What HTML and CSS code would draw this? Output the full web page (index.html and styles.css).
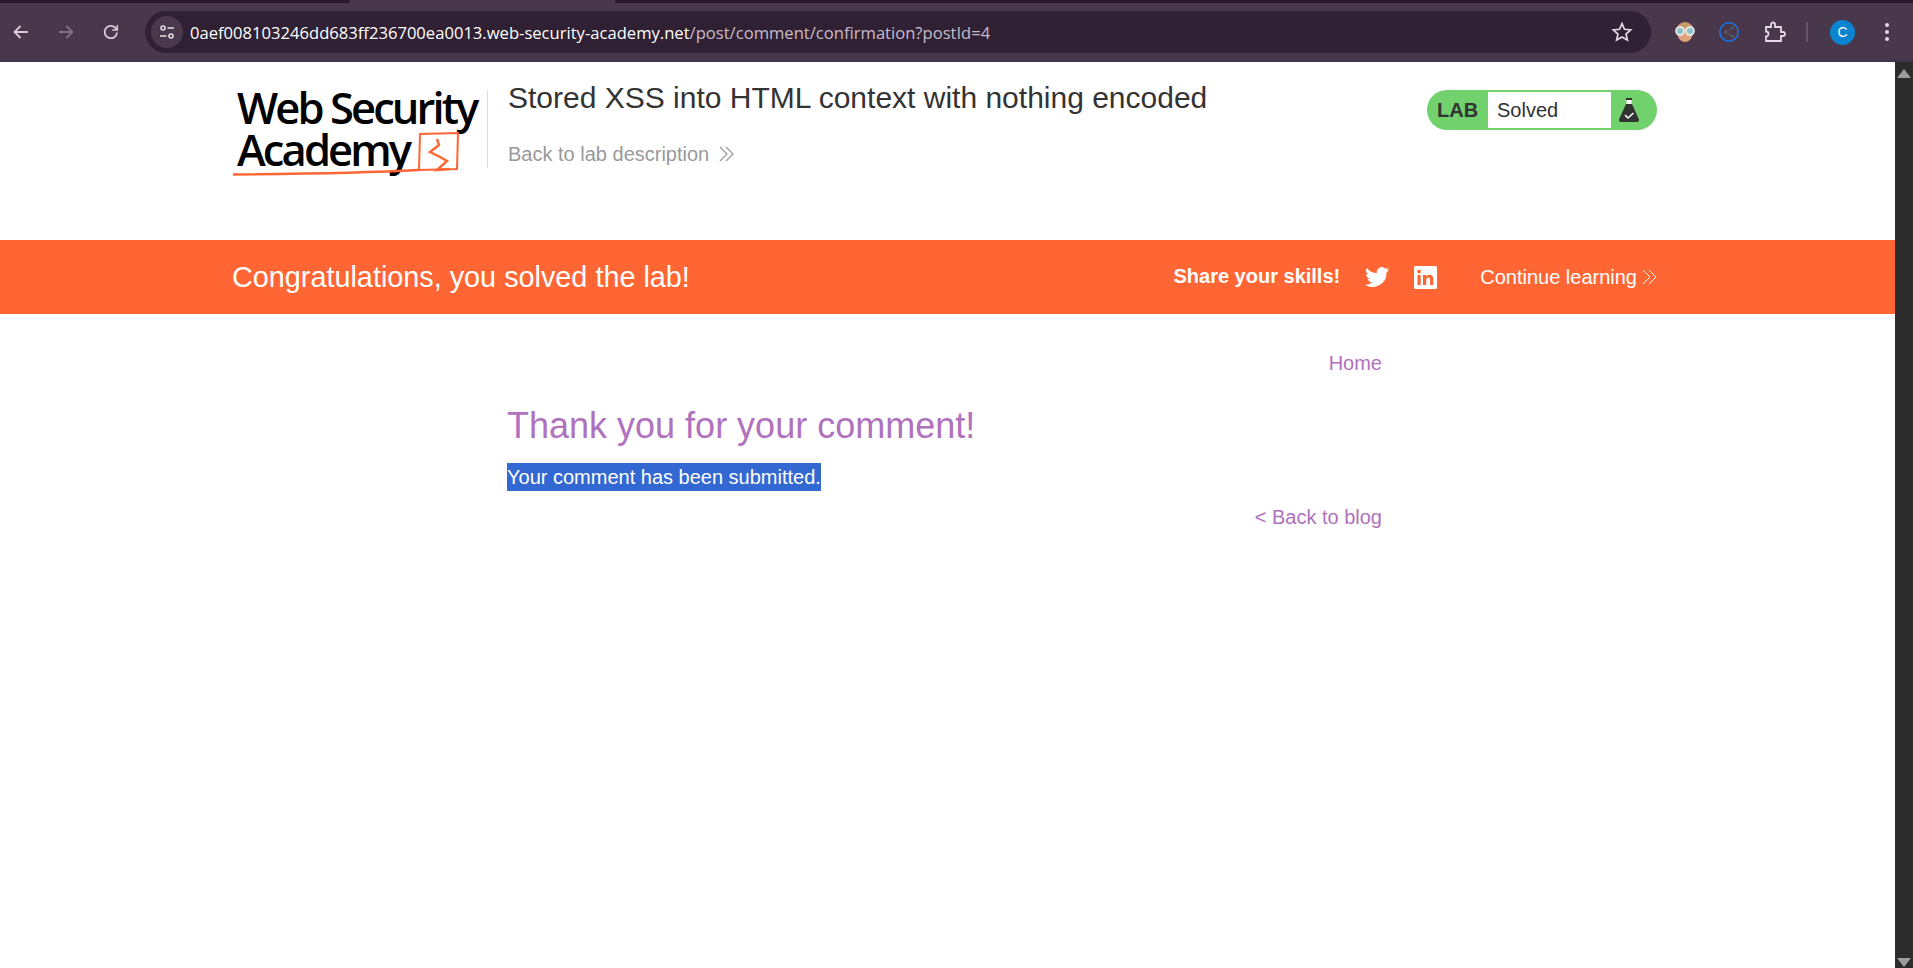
FILE: index.html
```html
<!DOCTYPE html>
<html>
<head>
    <title>Stored XSS into HTML context with nothing encoded</title>
    <link rel="stylesheet" href="styles.css">
</head>
<body>
    <div class="browser-top">
        <div class="tab-strip"><div class="active-tab"></div></div>
        <div class="toolbar">
            <button class="tool-btn">
                <svg width="20" height="20" viewBox="0 0 20 20" fill="none" stroke="#d9cdda" stroke-width="1.8"><path d="M17 10H4M9.5 4 3.5 10l6 6"/></svg>
            </button>
            <button class="tool-btn">
                <svg width="20" height="20" viewBox="0 0 20 20" fill="none" stroke="#7f7281" stroke-width="1.8"><path d="M3 10h13M10.5 4l6 6-6 6"/></svg>
            </button>
            <button class="tool-btn">
                <svg width="20" height="20" viewBox="0 0 20 20" fill="none" stroke="#d9cdda" stroke-width="1.8"><path d="M16 10.5A6.2 6.2 0 1 1 14.2 5.6L16 7.5"/><path d="M16.3 3v5h-5" stroke-width="1.6"/></svg>
            </button>
            <div class="omnibox">
                <span class="site-info">
                    <svg width="18" height="18" viewBox="0 0 18 18" fill="none" stroke="#e6dce7" stroke-width="1.6"><circle cx="5" cy="5" r="2"/><path d="M9.5 5H16M2 13h6.5"/><circle cx="13" cy="13" r="2"/></svg>
                </span>
                <span class="url"><span class="url-host">0aef008103246dd683ff236700ea0013.web-security-academy.net</span>/post/comment/confirmation?postId=4</span>
                <svg class="star" width="22" height="22" viewBox="0 0 22 22" fill="none" stroke="#e3d8e4" stroke-width="1.7"><path d="M11 2.6l2.5 5.7 6.2.6-4.7 4.1 1.4 6.1L11 15.9l-5.4 3.2 1.4-6.1-4.7-4.1 6.2-.6z"/></svg>
            </div>
            <div class="extensions">
                <svg width="22" height="24" viewBox="0 0 22 24"><circle cx="11" cy="11" r="9" fill="#c79a6a"/><circle cx="11" cy="15" r="7" fill="#e0a27c"/><circle cx="6" cy="11" r="4" fill="#8fc0cc" stroke="#f2f2f2" stroke-width="1.6"/><circle cx="16" cy="11" r="4" fill="#8fc0cc" stroke="#f2f2f2" stroke-width="1.6"/></svg>
                <svg width="22" height="22" viewBox="0 0 22 22" fill="none"><circle cx="11" cy="11" r="9.2" stroke="#1a73e8" stroke-width="1.5"/><g stroke="#5f5560" fill="#5f5560"><path d="M14.5 7 7.5 11l7 4" fill="none"/><circle cx="14.5" cy="7" r="1.3"/><circle cx="7.5" cy="11" r="1.3"/><circle cx="14.5" cy="15" r="1.3"/></g></svg>
                <svg class="puzzle" width="22" height="22" viewBox="0 0 22 22" fill="none" stroke="#e3d8e4" stroke-width="1.8"><path d="M2 6h5V3.5a2 2 0 0 1 4 0V6h6v5h2a2 2 0 0 1 0 4h-2v5H2v-4.500a2.500 2.500 0 0 0 0-5z"/></svg>
                <span class="toolbar-sep"></span>
                <span class="avatar">C</span>
                <svg width="6" height="20" viewBox="0 0 6 20" fill="#e3d8e4"><circle cx="3" cy="3" r="2"/><circle cx="3" cy="10" r="2"/><circle cx="3" cy="17" r="2"/></svg>
            </div>
        </div>
    </div>

    <div class="viewport">
        <div class="page">
            <header class="lab-header">
                <div class="logo">
                    <div class="logo-text">
                        <div class="logo-line">Web Security</div>
                        <div class="logo-line">Academy</div>
                    </div>
                    <svg class="logo-mark" width="232" height="50" viewBox="0 0 232 50" fill="none" stroke="#ff6633"><path d="M1 44.500C60 44 130 43 187 40" stroke-width="2.400"/><path d="M187 40 188 4 226 3 225 39 187 40" stroke-width="2"/><path d="M205 9l2 6-9 7 10 5 7 4-10 9 12-1" stroke-width="2.400"/></svg>
                </div>
                <div class="lab-title">
                    <h2>Stored XSS into HTML context with nothing encoded</h2>
                    <a class="back-link">Back to lab description
                        <svg width="15" height="16" viewBox="0 0 15 16" fill="none" stroke="#999" stroke-width="1.200"><path d="M1 1l7 7-7 7M7 1l7 7-7 7"/></svg>
                    </a>
                </div>
                <div class="lab-status">
                    <span class="lab-tag">LAB</span>
                    <span class="lab-state">Solved</span>
                    <span class="lab-icon">
                        <svg width="20" height="26" viewBox="0 0 20 26"><path d="M7 1h6v2H7z" fill="#333"/><path d="M7.500 3h5v5h-5z" fill="#fff"/><path d="M7 7h6l7 15.500a2 2 0 0 1-2 2.500H2a2 2 0 0 1-2-2.500z" fill="#333"/><path d="M6 18l3 3 5.500-5" fill="none" stroke="#fff" stroke-width="1.600"/></svg>
                    </span>
                </div>
            </header>

            <section class="solved-banner">
                <div class="banner-inner">
                    <h4>Congratulations, you solved the lab!</h4>
                    <div class="banner-actions">
                        <span class="share-text">Share your skills!</span>
                        <svg class="twitter" width="24" height="20" viewBox="0 0 24 20" fill="#fff"><path d="M24 2.400c-.9.400-1.800.7-2.800.8 1-.6 1.800-1.600 2.200-2.700-1 .6-2 1-3.100 1.200A4.900 4.900 0 0 0 11.900 6.100C7.800 5.900 4.200 4 1.700.9A4.900 4.900 0 0 0 3.200 7.500c-.8 0-1.600-.2-2.200-.6 0 2.400 1.700 4.400 3.900 4.900-.7.200-1.500.2-2.200.1.600 2 2.400 3.400 4.600 3.400A9.900 9.900 0 0 1 0 17.800 14 14 0 0 0 21.500 5.400c1-.7 1.800-1.600 2.500-3z"/></svg>
                        <svg class="linkedin" width="23" height="23" viewBox="0 0 23 23"><rect width="23" height="23" rx="1.500" fill="#fff"/><g fill="#ff6633"><rect x="3.500" y="9" width="3.200" height="10"/><circle cx="5.100" cy="5.600" r="1.900"/><path d="M9 9h3v1.500c.7-1.100 1.900-1.800 3.300-1.800 2.700 0 4 1.700 4 4.500V19h-3.200v-5.200c0-1.400-.5-2.300-1.700-2.300s-2.200.9-2.200 2.400V19H9z"/></g></svg>
                        <a class="continue-link">Continue learning
                            <svg width="15" height="16" viewBox="0 0 15 16" fill="none" stroke="#fff" stroke-width="1"><path d="M1 1l7 7-7 7M7 1l7 7-7 7"/></svg>
                        </a>
                    </div>
                </div>
            </section>

            <main class="content">
                <nav class="top-links"><a>Home</a></nav>
                <h1>Thank you for your comment!</h1>
                <p><span class="selected">Your comment has been submitted.</span></p>
                <div class="is-linkback"><a>&lt; Back to blog</a></div>
            </main>
        </div>
        <div class="scrollbar">
            <span class="arrow-up"></span>
            <span class="arrow-down"></span>
        </div>
    </div>
</body>
</html>
```

FILE: styles.css
```css
html, body {
    margin: 0;
    height: 100%;
    overflow: hidden;
}
body {
    font-family: "Liberation Sans", Arial, sans-serif;
    display: flex;
    flex-direction: column;
    background-color: #fff;
}

/* browser chrome */
.browser-top {
    flex: none;
}
.tab-strip {
    height: 3px;
    padding-left: 350px;
    background-color: #2a1a2e;
}
.active-tab {
    width: 265px;
    height: 3px;
    background-color: #49384b;
}
.toolbar {
    height: 59px;
    border-bottom: 2px solid #453644;
    background-color: #49384b;
    display: flex;
    align-items: center;
    padding: 1px 0 0 11px;
    box-sizing: border-box;
}
.tool-btn {
    width: 45px;
    height: 30px;
    padding: 0;
    background: none;
    border: none;
    display: flex;
    align-items: center;
    justify-content: flex-start;
}
.omnibox {
    width: 1506px;
    height: 42px;
    margin-left: -1px;
    border-radius: 21px;
    background-color: #2f2033;
    display: flex;
    align-items: center;
    padding: 0 18px 0 6px;
    box-sizing: border-box;
}
.site-info {
    width: 32px;
    height: 32px;
    border-radius: 50%;
    background-color: #49384b;
    display: flex;
    align-items: center;
    justify-content: center;
    margin-right: 7px;
}
.url {
    flex: 1;
    padding-top: 1px;
    font-family: "Open Sans", "Liberation Sans", sans-serif;
    font-size: 16.600px;
    color: #c8bcc9;
    white-space: nowrap;
}
.url-host {
    color: #fff;
}
.extensions {
    display: flex;
    align-items: center;
    margin-left: 23px;
    gap: 22px;
}
.puzzle {
    margin-left: 2px;
}
.toolbar-sep {
    width: 2px;
    height: 20px;
    margin-left: -2px;
    background-color: #65556a;
}
.avatar {
    width: 25px;
    height: 25px;
    border-radius: 50%;
    margin-right: 7px;
    background-color: #0a84d0;
    color: #fff;
    font-size: 14px;
    line-height: 25px;
    text-align: center;
}

/* page area */
.viewport {
    flex: 1;
    display: flex;
    min-height: 0;
}
.page {
    flex: 1;
    min-width: 0;
}
.scrollbar {
    width: 18px;
    background-color: #2c2c2c;
    display: flex;
    flex-direction: column;
    justify-content: space-between;
    align-items: center;
    padding: 7px 0 1px;
    box-sizing: border-box;
}
.arrow-up {
    width: 0;
    height: 0;
    border-left: 7px solid transparent;
    border-right: 7px solid transparent;
    border-bottom: 9px solid #9b9b9b;
}
.arrow-down {
    width: 0;
    height: 0;
    border-left: 7px solid transparent;
    border-right: 7px solid transparent;
    border-top: 9px solid #9b9b9b;
}

/* lab header */
.lab-header {
    height: 178px;
    padding: 0 238px 0 232px;
    display: flex;
    align-items: flex-start;
    box-sizing: border-box;
}
.logo {
    width: 256px;
    height: 78px;
    margin-top: 28px;
    border-right: 1px solid #ddd;
    position: relative;
    color: #000;
    font-family: "Open Sans", "Noto Sans", sans-serif;
    font-size: 43.500px;
    font-weight: 600;
    letter-spacing: -2.900px;
    line-height: 42px;
    padding-left: 5px;
    box-sizing: border-box;
}
.logo-text {
    margin-top: -3px;
}
.logo-line {
    white-space: nowrap;
}
.logo-mark {
    position: absolute;
    left: 0;
    top: 40px;
}
.lab-title {
    flex: 1;
    padding-left: 20px;
    padding-top: 19px;
}
.lab-title h2 {
    margin: 0;
    font-size: 30px;
    font-weight: normal;
    line-height: 34px;
    color: #333;
}
.back-link {
    display: inline-flex;
    align-items: center;
    gap: 10px;
    margin-top: 27px;
    font-size: 20px;
    line-height: 24px;
    color: #999;
}
.lab-status {
    width: 230px;
    height: 40px;
    margin-top: 28px;
    display: flex;
    border-radius: 20px;
    overflow: hidden;
    background-color: #70d16d;
    padding: 2px 0;
    box-sizing: border-box;
}
.lab-tag {
    width: 61px;
    padding-left: 10px;
    box-sizing: border-box;
    font-size: 20px;
    font-weight: bold;
    line-height: 36px;
    color: #333;
}
.lab-state {
    width: 123px;
    padding-left: 9px;
    box-sizing: border-box;
    background-color: #fff;
    font-size: 20px;
    line-height: 36px;
    color: #333;
}
.lab-icon {
    flex: 1;
    display: flex;
    align-items: center;
    padding-left: 8px;
}

/* solved banner */
.solved-banner {
    height: 74px;
    background-color: #ff6633;
    color: #fff;
    padding: 0 238px 0 232px;
}
.banner-inner {
    height: 100%;
    display: flex;
    align-items: center;
    justify-content: space-between;
}
.banner-inner h4 {
    margin: 0;
    font-size: 28.800px;
    font-weight: normal;
}
.banner-actions {
    display: flex;
    align-items: center;
}
.share-text {
    margin-top: -2px;
    font-size: 20px;
    font-weight: bold;
}
.twitter {
    margin-left: 25px;
}
.linkedin {
    margin-left: 25px;
}
.continue-link {
    display: inline-flex;
    align-items: center;
    gap: 5px;
    margin-left: 43px;
    font-size: 20px;
}

/* main content */
.content {
    width: 875px;
    margin-left: 507px;
    padding-top: 37px;
    color: #333;
}
.top-links {
    text-align: right;
    font-size: 20px;
    line-height: 24px;
}
.top-links a, .is-linkback a {
    color: #b071bd;
}
.content h1 {
    margin: 30px 0 0;
    font-size: 36px;
    font-weight: normal;
    line-height: 42px;
    color: #b071bd;
}
.content p {
    margin: 16px 0 0;
    font-size: 20px;
    line-height: 28px;
}
.selected {
    display: inline-block;
    background-color: #3367d1;
    color: #fff;
}
.is-linkback {
    margin-top: 12px;
    text-align: right;
    font-size: 20px;
    line-height: 28px;
}
```
